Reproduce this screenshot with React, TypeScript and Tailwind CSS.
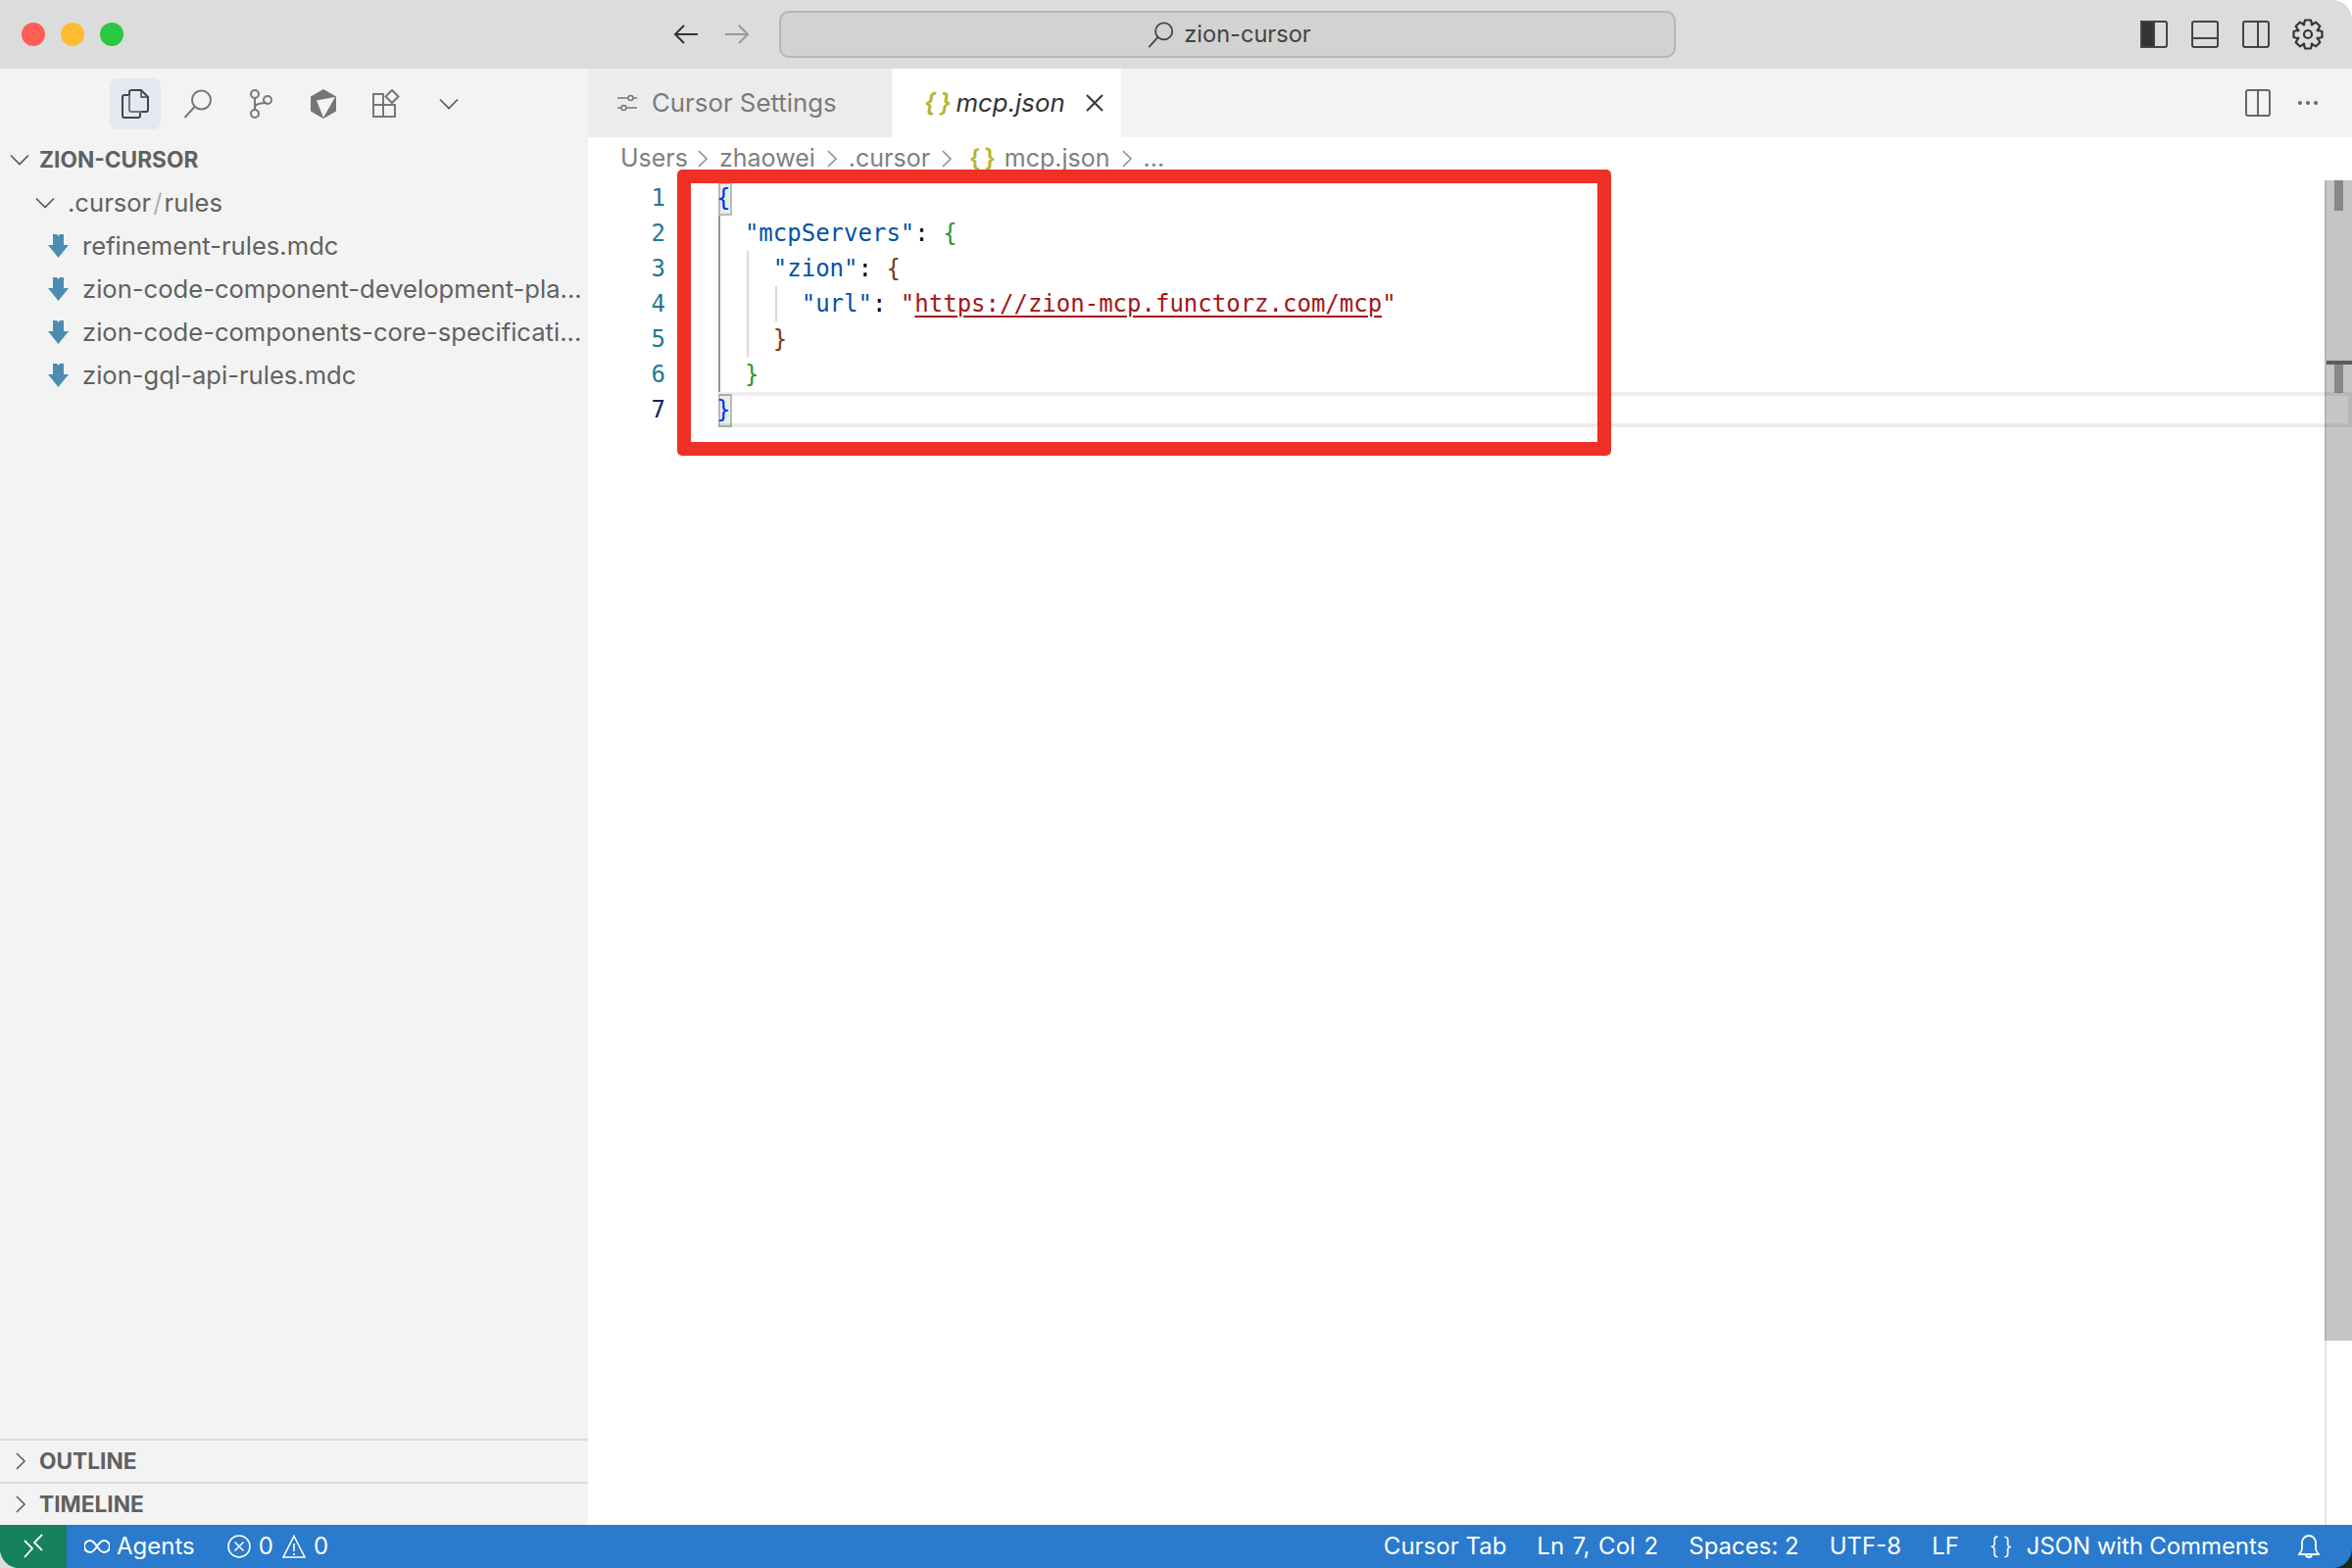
import type { ReactNode } from "react";

const uiFont = "font-['Inter','Noto_Sans',sans-serif]";
const monoFont = "font-['DejaVu_Sans_Mono',monospace]";

function PanelIcon({ side, filled }: { side: "left" | "bottom" | "right"; filled?: boolean }) {
  return (
    <svg width="30" height="30" viewBox="0 0 30 30" fill="none" stroke="#444" strokeWidth="2">
      <rect x="2" y="2" width="26" height="26" rx="2" />
      {side === "left" && <rect x="2" y="2" width="13" height="26" fill={filled ? "#333" : "none"} />}
      {side === "bottom" && <path d="M2 19h26" />}
      {side === "right" && <path d="M17 2v26" />}
    </svg>
  );
}

function gearPath() {
  const pts: string[] = [];
  for (let i = 0; i < 8; i++) {
    const a = (i * Math.PI) / 4;
    const spread = [
      [-0.42, 10.5],
      [-0.2, 14.8],
      [0.2, 14.8],
      [0.42, 10.5],
    ];
    for (const [d, r] of spread) {
      pts.push(`${(16 + r * Math.sin(a + d)).toFixed(2)} ${(16 - r * Math.cos(a + d)).toFixed(2)}`);
    }
  }
  return `M${pts.join("L")}Z`;
}

function Gear() {
  return (
    <svg width="32" height="32" viewBox="0 0 32 32" fill="none" stroke="#333" strokeWidth="2.2">
      <circle cx="16" cy="16" r="4" />
      <path d={gearPath()} strokeLinejoin="round" />
    </svg>
  );
}

function SearchGlass({ size, color }: { size: number; color: string }) {
  return (
    <svg width={size} height={size} viewBox="0 0 30 30" fill="none" stroke={color} strokeWidth="2">
      <circle cx="18.5" cy="11" r="9.5" />
      <path d="M11.5 18 1.5 29" />
    </svg>
  );
}

function Chevron({ dir, size = 20, color = "#555" }: { dir: "down" | "right"; size?: number; color?: string }) {
  return (
    <svg width={size} height={size} viewBox="0 0 20 20" fill="none" stroke={color} strokeWidth="1.6" className="shrink-0">
      {dir === "down" ? <path d="M1 5.5 10 14.5 19 5.5" /> : <path d="M5.5 1 14.5 10 5.5 19" />}
    </svg>
  );
}

function Braces({ color, className = "" }: { color: string; className?: string }) {
  return (
    <span className={`inline-flex gap-[4px] ${className}`} style={{ color }}>
      <span>{"{"}</span>
      <span>{"}"}</span>
    </span>
  );
}

function MdcIcon() {
  return (
    <svg width="21" height="24" viewBox="0 0 21 24" className="shrink-0">
      <path d="M5 0h4l1.500 2L12 0h4v11h5L10.500 24 0 11h5z" fill="#4a8db0" />
    </svg>
  );
}

function ActivityBar() {
  return (
    <div className="flex h-[71px] items-center gap-[12px] pl-[112px]">
      <div className="flex h-[52px] w-[52px] items-center justify-center rounded-[8px] bg-[#e6e8f1]">
        <svg width="28" height="30" viewBox="0 0 28 30" fill="none" stroke="#444" strokeWidth="2">
          <path d="M8 6V3a2 2 0 0 1 2-2h10l7 7v13a2 2 0 0 1-2 2h-5" />
          <path d="M20 1v7h7" strokeWidth="1.500" />
          <path d="M8 6H3a2 2 0 0 0-2 2v19a2 2 0 0 0 2 2h14a2 2 0 0 0 2-2v-4" />
          <path d="M8 6v15a2 2 0 0 0 2 2h10" stroke="#777" />
        </svg>
      </div>
      <div className="flex h-[52px] w-[52px] items-center justify-center">
        <SearchGlass size={30} color="#777" />
      </div>
      <div className="flex h-[52px] w-[52px] items-center justify-center">
        <svg width="24" height="30" viewBox="0 0 24 30" fill="none" stroke="#777" strokeWidth="2">
          <circle cx="6" cy="5" r="4" />
          <circle cx="6" cy="25" r="4" />
          <circle cx="19" cy="11" r="4" />
          <path d="M6 9v12M6 19c0-3 2-4 6-4.500 3-.3 5-.5 6-1" />
        </svg>
      </div>
      <div className="flex h-[52px] w-[52px] items-center justify-center">
        <svg width="28" height="32" viewBox="0 0 28 32">
          <path d="M14 1 27 8.500v15L14 31 1 23.500v-15z" fill="#757575" />
          <path d="M7 12.500 26 9 14 30z" fill="#f3f3f3" />
        </svg>
      </div>
      <div className="flex h-[52px] w-[52px] items-center justify-center">
        <svg width="28" height="30" viewBox="0 0 28 30" fill="none" stroke="#777" strokeWidth="2">
          <path d="M1 5h10v11H1zM1 16h10v12H1zM11 16h12v12H11z" />
          <path d="M20 1l6.500 6.500L20 14l-6.500-6.500z" />
        </svg>
      </div>
      <div className="flex h-[52px] w-[52px] items-center justify-center">
        <Chevron dir="down" />
      </div>
    </div>
  );
}

function FileRow({ name }: { name: string }) {
  return (
    <div className="flex h-[44px] items-center pl-[49px]">
      <MdcIcon />
      <span className="ml-[14px] whitespace-nowrap text-[#616161]">{name}</span>
    </div>
  );
}

function Section({ label }: { label: string }) {
  return (
    <div className="flex h-[44px] items-center border-t-2 border-[#dadada] pl-[12px]">
      <Chevron dir="right" size={18} />
      <span className="ml-[10px] text-[22.7px] font-bold text-[#616161]">{label}</span>
    </div>
  );
}

function Sidebar() {
  return (
    <aside className="flex w-[600px] shrink-0 flex-col bg-[#f3f3f3] text-[25.6px]">
      <ActivityBar />
      <div className="flex h-[44px] items-center pl-[10px]">
        <Chevron dir="down" />
        <span className="ml-[10px] text-[22.7px] font-bold text-[#616161]">ZION-CURSOR</span>
      </div>
      <div className="flex h-[44px] items-center pl-[36px] text-[#616161]">
        <Chevron dir="down" />
        <span className="ml-[13px]">.cursor</span>
        <span className="mx-[2px] text-[#b0b0b0]">/</span>
        <span>rules</span>
      </div>
      <FileRow name="refinement-rules.mdc" />
      <FileRow name="zion-code-component-development-pla..." />
      <FileRow name="zion-code-components-core-specificati..." />
      <FileRow name="zion-gql-api-rules.mdc" />
      <div className="flex-1" />
      <Section label="OUTLINE" />
      <Section label="TIMELINE" />
    </aside>
  );
}

function TabBar() {
  return (
    <div className="flex h-[70px] items-center bg-[#f3f3f3] text-[25.8px]">
      <div className="flex h-full w-[309px] items-center bg-[#ececec] pl-[30px] text-[#7a7a7a]">
        <svg width="20" height="18" viewBox="0 0 20 18" fill="none" stroke="#777" strokeWidth="1.500">
          <path d="M0 4h11M16 4h4M0 14h4M9 14h11" />
          <circle cx="13.500" cy="4" r="2.500" />
          <circle cx="6.500" cy="14" r="2.500" />
        </svg>
        <span className="ml-[15px]">Cursor Settings</span>
      </div>
      <div className="ml-[2px] flex h-full w-[233px] items-center bg-white pl-[32px]">
        <Braces color="#b5b52f" className="font-semibold italic" />
        <span className="ml-[5px] italic text-[#333]">mcp.json</span>
        <svg width="18" height="18" viewBox="0 0 18 18" fill="none" stroke="#333" strokeWidth="2" className="ml-[21px]">
          <path d="M1 1l16 16M17 1 1 17" />
        </svg>
      </div>
      <div className="ml-auto flex items-center pr-[35px]">
        <svg width="26" height="28" viewBox="0 0 26 28" fill="none" stroke="#666" strokeWidth="2">
          <rect x="1" y="1" width="24" height="26" rx="2" />
          <path d="M13 1v26" />
        </svg>
        <div className="ml-[28px] flex gap-[4px]">
          <span className="h-[4px] w-[4px] rounded-full bg-[#666]" />
          <span className="h-[4px] w-[4px] rounded-full bg-[#666]" />
          <span className="h-[4px] w-[4px] rounded-full bg-[#666]" />
        </div>
      </div>
    </div>
  );
}

function Crumb({ children }: { children: ReactNode }) {
  return <span className="text-[#808080]">{children}</span>;
}

function Breadcrumbs() {
  const sep = <Chevron dir="right" size={18} color="#888" />;
  return (
    <div className="flex h-[44px] items-center gap-[8px] bg-white pl-[33px] text-[25px]">
      <span className="mr-[-2px]">
        <Crumb>Users</Crumb>
      </span>
      {sep}
      <Crumb>zhaowei</Crumb>
      {sep}
      <Crumb>.cursor</Crumb>
      {sep}
      <Braces color="#b5b52f" className="ml-[6px] font-semibold" />
      <span className="ml-[1px]">
        <Crumb>mcp.json</Crumb>
      </span>
      {sep}
      <Crumb>...</Crumb>
    </div>
  );
}

type Tok = { t: string; c: string; link?: boolean };

const KEY = "text-[#0451a5]";
const PUN = "text-black";
const STR = "text-[#a31515]";

const lines: { indent: number; guides: number[]; toks: Tok[] }[] = [
  { indent: 0, guides: [], toks: [{ t: "{", c: "text-[#0431fa]" }] },
  { indent: 2, guides: [0], toks: [{ t: '"mcpServers"', c: KEY }, { t: ": ", c: PUN }, { t: "{", c: "text-[#319331]" }] },
  { indent: 4, guides: [0, 1], toks: [{ t: '"zion"', c: KEY }, { t: ": ", c: PUN }, { t: "{", c: "text-[#7b3814]" }] },
  {
    indent: 6,
    guides: [0, 1, 2],
    toks: [
      { t: '"url"', c: KEY },
      { t: ": ", c: PUN },
      { t: '"', c: STR },
      { t: "https://zion-mcp.functorz.com/mcp", c: STR, link: true },
      { t: '"', c: STR },
    ],
  },
  { indent: 4, guides: [0, 1], toks: [{ t: "}", c: "text-[#7b3814]" }] },
  { indent: 2, guides: [0], toks: [{ t: "}", c: "text-[#319331]" }] },
  { indent: 0, guides: [], toks: [{ t: "}", c: "text-[#0431fa]" }] },
];

function CodeLine({ n, line }: { n: number; line: (typeof lines)[number] }) {
  return (
    <div className={`flex h-[36px] items-center text-[24px] leading-[36px] ${monoFont}`}>
      <span className={`w-[79px] shrink-0 text-right ${n === 7 ? "text-[#0b216f]" : "text-[#237893]"}`}>{n}</span>
      <div className="relative ml-[52px] h-full flex-1 whitespace-pre">
        {line.guides.map((g) => (
          <span
            key={g}
            style={{ left: g * 29 + 2 }}
            className={`absolute top-0 h-full w-[2px] ${g === 0 ? "bg-[#939393]" : "bg-[#d9d9d9]"}`}
          />
        ))}
        {(n === 1 || n === 7) && (
          <span className="absolute left-[2px] top-[2px] h-[34px] w-[14px] border-2 border-[#b9b9b9] bg-[#e6efe6]" />
        )}
        <span className="relative" style={{ marginLeft: line.indent * 14.45 }}>
          {line.toks.map((tok, i) => (
            <span key={i} className={`${tok.c} ${tok.link ? "underline decoration-2 underline-offset-[4px]" : ""}`}>
              {tok.t}
            </span>
          ))}
        </span>
      </div>
    </div>
  );
}

function Editor() {
  return (
    <main className="relative flex min-w-0 flex-1 flex-col bg-white">
      <TabBar />
      <Breadcrumbs />
      <div className="flex flex-1">
        <div className="flex-1">
          {lines.map((line, i) => (
            <CodeLine key={i} n={i + 1} line={line} />
          ))}
        </div>
        <div className="flex w-[28px] flex-col">
          <div className="relative h-[1184px] border-l-2 border-[#b5b5b5] bg-[#c5c5c5]">
            <span className="absolute left-[8px] top-0 h-[31px] w-[9px] bg-[#878787]" />
            <span className="absolute left-[8px] top-[186px] h-[31px] w-[9px] bg-[#878787]" />
            <span className="absolute left-0 top-[184px] h-[4px] w-[28px] bg-[#5b5b5b]" />
          </div>
          <div className="flex-1 border-l-2 border-[#e5e5e5]" />
        </div>
      </div>
      {/* current line highlight */}
      <div className="absolute left-[133px] right-0 top-[330px] h-[36px] border-y-4 border-r-4 border-black/[0.07]" />
      {/* red annotation box */}
      <div className="absolute left-[91px] top-[103px] h-[292px] w-[953px] rounded-[5px] border-[14px] border-[#ee3026]" />
    </main>
  );
}

function StatusBar() {
  return (
    <footer className="flex h-[44px] items-center bg-[#2a7acd] text-[24px] text-white">
      <div className="flex h-full w-[68px] items-center justify-center bg-[#16825d]">
        <svg width="20" height="26" viewBox="0 0 20 26" fill="none" stroke="#fff" strokeWidth="1.800">
          <path d="M1 7l8 8-8 9" />
          <path d="M19 1l-8 8 8 8" />
        </svg>
      </div>
      <svg width="26" height="14" viewBox="0 0 26 14" fill="none" stroke="#fff" strokeWidth="2" className="ml-[18px]">
        <path d="M13 7C10 2.500 8.500 1 6 1a6 6 0 0 0 0 12c2.500 0 4-1.500 7-6s4.500-6 7-6a6 6 0 0 1 0 12c-2.500 0-4-1.500-7-6z" />
      </svg>
      <span className="ml-[7px]">Agents</span>
      <svg width="24" height="24" viewBox="0 0 24 24" fill="none" stroke="#fff" strokeWidth="1.600" className="ml-[33px]">
        <circle cx="12" cy="12" r="11" />
        <path d="M7.500 7.500l9 9M16.500 7.500l-9 9" />
      </svg>
      <span className="ml-[8px]">0</span>
      <svg width="24" height="24" viewBox="0 0 24 24" fill="none" stroke="#fff" strokeWidth="1.600" className="ml-[9px]">
        <path d="M12 1.500 23 23H1z" />
        <path d="M12 9v8M12 19v2" />
      </svg>
      <span className="ml-[8px]">0</span>
      <div className="ml-auto flex items-center gap-[31px] pr-[33px]">
        <span>Cursor Tab</span>
        <span className="[word-spacing:2px]">Ln 7, Col 2</span>
        <span>Spaces: 2</span>
        <span>UTF-8</span>
        <span>LF</span>
        <span className="flex items-center gap-[14px]">
          <Braces color="#fff" className="font-light" />
          <span className="tracking-[-0.1px]">JSON with Comments</span>
        </span>
        <svg width="22" height="26" viewBox="0 0 22 26" fill="none" stroke="#fff" strokeWidth="1.800" className="ml-[-1px]">
          <path d="M1 21c2-2 3-3 3-6V9a7 7 0 0 1 14 0v6c0 3 1 4 3 6z" />
          <path d="M8 21a3 3 0 0 0 6 0" />
        </svg>
      </div>
    </footer>
  );
}

export default function App() {
  return (
    <div className={`relative h-[1600px] w-[2400px] overflow-hidden bg-[#dcdcdc] ${uiFont}`}>
      <div className="absolute bottom-0 right-0 h-[40px] w-[40px] bg-[#1c2a1e]" />
      <div className="absolute right-0 top-0 h-[40px] w-[40px] bg-white" />
      <div className="relative flex h-full flex-col overflow-hidden rounded-[20px]">
        <header className="relative flex h-[70px] shrink-0 items-center bg-[#dcdcdc]">
          <div className="flex gap-[16px] pl-[22px]">
            <span className="h-[24px] w-[24px] rounded-full bg-[#ff5f57]" />
            <span className="h-[24px] w-[24px] rounded-full bg-[#febc2e]" />
            <span className="h-[24px] w-[24px] rounded-full bg-[#28c840]" />
          </div>
          <svg width="26" height="22" viewBox="0 0 26 22" fill="none" stroke="#333" strokeWidth="2" className="ml-[561px]">
            <path d="M25 11H2M11 2l-9 9 9 9" />
          </svg>
          <svg width="26" height="22" viewBox="0 0 26 22" fill="none" stroke="#999" strokeWidth="2" className="ml-[26px]">
            <path d="M1 11h23M15 2l9 9-9 9" />
          </svg>
          <div className="ml-[30px] flex h-[48px] w-[915px] items-center justify-center gap-[10px] rounded-[10px] border-2 border-[#b5b5b5] bg-[#d2d2d2] pl-[4px] text-[23.6px] text-[#444]">
            <SearchGlass size={27} color="#444" />
            <span>zion-cursor</span>
          </div>
          <div className="ml-[473px] flex items-center gap-[22px]">
            <PanelIcon side="left" filled />
            <PanelIcon side="bottom" />
            <PanelIcon side="right" />
            <Gear />
          </div>
        </header>
        <div className="flex min-h-0 flex-1">
          <Sidebar />
          <Editor />
        </div>
        <StatusBar />
      </div>
    </div>
  );
}
